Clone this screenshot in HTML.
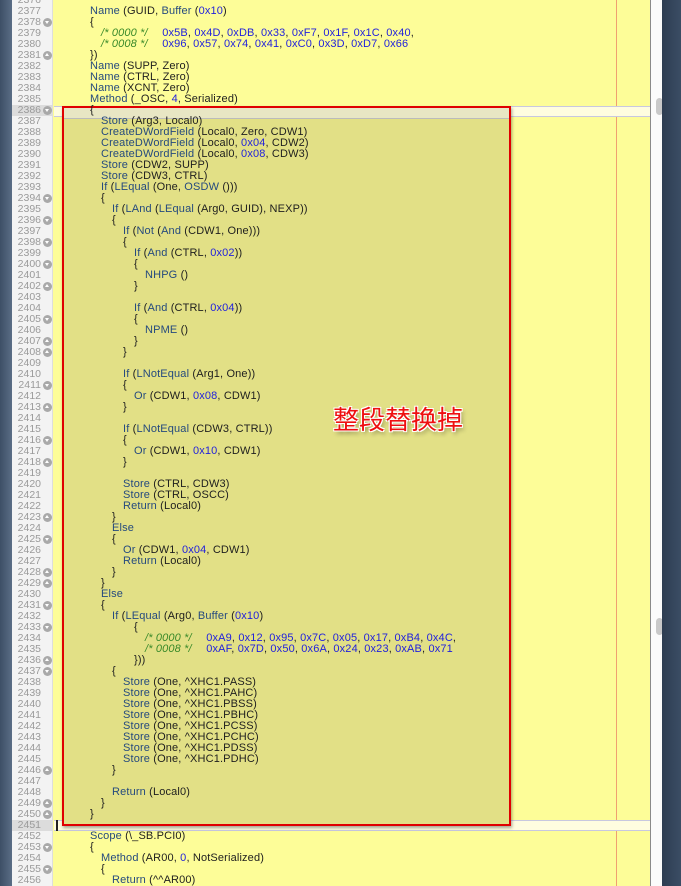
<!DOCTYPE html>
<html><head><meta charset="utf-8"><style>
*{margin:0;padding:0;box-sizing:border-box}
body{width:681px;height:886px;overflow:hidden;background:#fdfd98;position:relative;font-family:"Liberation Sans",sans-serif;font-size:11px;color:#1e1e1e}
#left{position:absolute;left:0;top:0;width:12px;height:886px;background:linear-gradient(90deg,#3d4f66,#5a6d85)}
#gut{position:absolute;left:12px;top:0;width:41px;height:886px;background:#f3f3f3;border-right:1px solid #ddd}
#code{position:absolute;left:54px;top:0;width:596px;height:886px;background:#fdfd98}
#sb{position:absolute;left:650px;top:0;width:12px;height:886px;background:#fbfbfb;border-left:1px solid #8a8a8a}
#right{position:absolute;left:662px;top:0;width:19px;height:886px;background:linear-gradient(90deg,#2d3d52,#3b4d64)}
.thumb{position:absolute;left:656px;width:7px;height:17px;border-radius:4px;background:#c9c9c9}
#vline{position:absolute;left:616px;top:0;width:1px;height:886px;background:#f0a070}
#cur{position:absolute;left:54px;top:106px;width:596px;height:11px;background:#fffde0;border-top:1px solid #c8c8e0;border-bottom:1px solid #c8c8e0}
#cur2{position:absolute;left:54px;top:820px;width:596px;height:11px;background:#fffde0;border-top:1px solid #c8c8e0;border-bottom:1px solid #c8c8e0}
#sel{position:absolute;left:62px;top:106px;width:449px;height:720px;background:#e2e086;border:2px solid #e00000;box-shadow:1px 2px 3px rgba(0,0,0,.35)}
#sel .top{position:absolute;left:0;top:0;width:445px;height:11px;background:#e8e6c4;border-bottom:1px solid #bbb}
.ln{position:absolute;left:12px;width:29px;height:11px;line-height:11px;text-align:right;color:#9a9a9a;font-size:10.5px}
.ln.a{background:#dcdcdc;width:41px;padding-right:12px}
.fm{position:absolute;left:43px;width:9px;height:9px;border-radius:50%;background:#a9a9a9}
.fm::after{content:"";position:absolute;left:2px;top:3px;border-left:2.5px solid transparent;border-right:2.5px solid transparent}
.fo::after{border-top:3px solid #fff}
.fc::after{border-bottom:3px solid #fff;top:2px}
.l{position:absolute;height:11px;line-height:11px;white-space:pre;letter-spacing:0.15px}
.k{color:#254a7e}.n{color:#1f1fdd}.cm{color:#3a8a2a;font-style:italic;display:inline-block;width:58px}
#txt{position:absolute;left:333px;top:400px;font-family:"Liberation Sans","Noto Sans CJK SC",sans-serif;font-size:26px;color:#ee1010;text-shadow:-1px -1px 0 #fff,1px -1px 0 #fff,-1px 1px 0 #fff,1px 1px 0 #fff,2px 3px 4px rgba(0,0,0,.4)}
#caret{position:absolute;left:56px;top:820px;width:2px;height:11px;background:#222}
</style></head><body>
<div id="left"></div><div id="gut"></div><div id="code"></div>
<div id="vline"></div>
<div id="cur"></div><div id="cur2"></div>
<div id="sel"><div class="top"></div></div>
<div id="sb"></div><div class="thumb" style="top:98px"></div><div class="thumb" style="top:618px"></div>
<div id="right"></div>
<div id="caret"></div>
<div id="lines"></div>
<div id="txt">整段替换掉</div>
<script>
var L=[
[0,""],
[0,'<span class="k">Name</span> (GUID, <span class="k">Buffer</span> (<span class="n">0x10</span>)'],
[0,'{'],
[1,'<span class="cm">/* 0000 */</span> <span class="n">0x5B</span>, <span class="n">0x4D</span>, <span class="n">0xDB</span>, <span class="n">0x33</span>, <span class="n">0xF7</span>, <span class="n">0x1F</span>, <span class="n">0x1C</span>, <span class="n">0x40</span>,'],
[1,'<span class="cm">/* 0008 */</span> <span class="n">0x96</span>, <span class="n">0x57</span>, <span class="n">0x74</span>, <span class="n">0x41</span>, <span class="n">0xC0</span>, <span class="n">0x3D</span>, <span class="n">0xD7</span>, <span class="n">0x66</span>'],
[0,'})'],
[0,'<span class="k">Name</span> (SUPP, Zero)'],
[0,'<span class="k">Name</span> (CTRL, Zero)'],
[0,'<span class="k">Name</span> (XCNT, Zero)'],
[0,'<span class="k">Method</span> (_OSC, <span class="n">4</span>, Serialized)'],
[0,'{'],
[1,'<span class="k">Store</span> (Arg3, Local0)'],
[1,'<span class="k">CreateDWordField</span> (Local0, Zero, CDW1)'],
[1,'<span class="k">CreateDWordField</span> (Local0, <span class="n">0x04</span>, CDW2)'],
[1,'<span class="k">CreateDWordField</span> (Local0, <span class="n">0x08</span>, CDW3)'],
[1,'<span class="k">Store</span> (CDW2, SUPP)'],
[1,'<span class="k">Store</span> (CDW3, CTRL)'],
[1,'<span class="k">If</span> (<span class="k">LEqual</span> (One, <span class="k">OSDW</span> ()))'],
[1,'{'],
[2,'<span class="k">If</span> (<span class="k">LAnd</span> (<span class="k">LEqual</span> (Arg0, GUID), NEXP))'],
[2,'{'],
[3,'<span class="k">If</span> (<span class="k">Not</span> (<span class="k">And</span> (CDW1, One)))'],
[3,'{'],
[4,'<span class="k">If</span> (<span class="k">And</span> (CTRL, <span class="n">0x02</span>))'],
[4,'{'],
[5,'<span class="k">NHPG</span> ()'],
[4,'}'],
[0,''],
[4,'<span class="k">If</span> (<span class="k">And</span> (CTRL, <span class="n">0x04</span>))'],
[4,'{'],
[5,'<span class="k">NPME</span> ()'],
[4,'}'],
[3,'}'],
[0,''],
[3,'<span class="k">If</span> (<span class="k">LNotEqual</span> (Arg1, One))'],
[3,'{'],
[4,'<span class="k">Or</span> (CDW1, <span class="n">0x08</span>, CDW1)'],
[3,'}'],
[0,''],
[3,'<span class="k">If</span> (<span class="k">LNotEqual</span> (CDW3, CTRL))'],
[3,'{'],
[4,'<span class="k">Or</span> (CDW1, <span class="n">0x10</span>, CDW1)'],
[3,'}'],
[0,''],
[3,'<span class="k">Store</span> (CTRL, CDW3)'],
[3,'<span class="k">Store</span> (CTRL, OSCC)'],
[3,'<span class="k">Return</span> (Local0)'],
[2,'}'],
[2,'<span class="k">Else</span>'],
[2,'{'],
[3,'<span class="k">Or</span> (CDW1, <span class="n">0x04</span>, CDW1)'],
[3,'<span class="k">Return</span> (Local0)'],
[2,'}'],
[1,'}'],
[1,'<span class="k">Else</span>'],
[1,'{'],
[2,'<span class="k">If</span> (<span class="k">LEqual</span> (Arg0, <span class="k">Buffer</span> (<span class="n">0x10</span>)'],
[4,'{'],
[5,'<span class="cm">/* 0000 */</span> <span class="n">0xA9</span>, <span class="n">0x12</span>, <span class="n">0x95</span>, <span class="n">0x7C</span>, <span class="n">0x05</span>, <span class="n">0x17</span>, <span class="n">0xB4</span>, <span class="n">0x4C</span>,'],
[5,'<span class="cm">/* 0008 */</span> <span class="n">0xAF</span>, <span class="n">0x7D</span>, <span class="n">0x50</span>, <span class="n">0x6A</span>, <span class="n">0x24</span>, <span class="n">0x23</span>, <span class="n">0xAB</span>, <span class="n">0x71</span>'],
[4,'}))'],
[2,'{'],
[3,'<span class="k">Store</span> (One, ^XHC1.PASS)'],
[3,'<span class="k">Store</span> (One, ^XHC1.PAHC)'],
[3,'<span class="k">Store</span> (One, ^XHC1.PBSS)'],
[3,'<span class="k">Store</span> (One, ^XHC1.PBHC)'],
[3,'<span class="k">Store</span> (One, ^XHC1.PCSS)'],
[3,'<span class="k">Store</span> (One, ^XHC1.PCHC)'],
[3,'<span class="k">Store</span> (One, ^XHC1.PDSS)'],
[3,'<span class="k">Store</span> (One, ^XHC1.PDHC)'],
[2,'}'],
[0,''],
[2,'<span class="k">Return</span> (Local0)'],
[1,'}'],
[0,'}'],
[0,''],
[0,'<span class="k">Scope</span> (\\_SB.PCI0)'],
[0,'{'],
[1,'<span class="k">Method</span> (AR00, <span class="n">0</span>, NotSerialized)'],
[1,'{'],
[2,'<span class="k">Return</span> (^^AR00)']
];
var O=[2378,2386,2394,2396,2398,2400,2405,2411,2416,2425,2431,2433,2437,2453,2455];
var C=[2381,2402,2407,2408,2413,2418,2423,2428,2429,2436,2446,2449,2450];
var h='';
for(var i=0;i<L.length;i++){
 var n=2376+i,t=-5+11*i;
 h+='<div class="ln'+((n==2386||n==2451)?' a':'')+'" style="top:'+t+'px">'+n+'</div>';
 if(O.indexOf(n)>=0)h+='<div class="fm fo" style="top:'+(t+1)+'px"></div>';
 if(C.indexOf(n)>=0)h+='<div class="fm fc" style="top:'+(t+1)+'px"></div>';
 h+='<div class="l" style="top:'+t+'px;left:'+(90+11*L[i][0])+'px">'+L[i][1]+'</div>';
}
document.getElementById('lines').innerHTML=h;
</script>
</body></html>
